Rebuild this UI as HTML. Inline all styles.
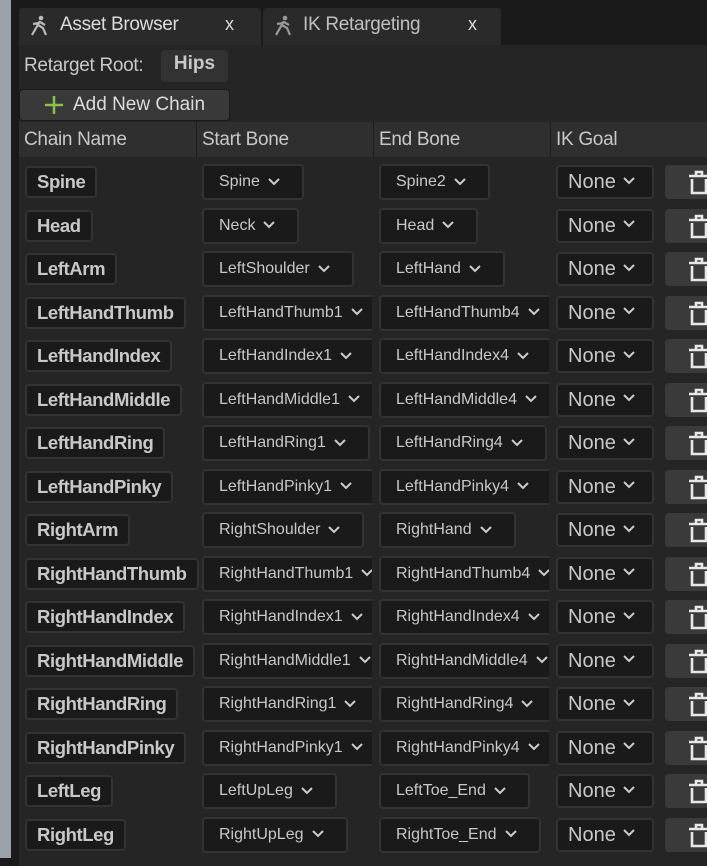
<!DOCTYPE html><html><head><style>
body{margin:0;width:707px;height:866px;background:#1a1a1a;position:relative;overflow:hidden;font-family:"Liberation Sans",sans-serif;color:#c8c8c8}
.strip{position:absolute;left:0;top:0;width:11px;height:858px;background:#9aa1ab}
.tab{position:absolute;top:8px;height:37px;background:#2a2a2a;border-radius:4px 4px 0 0;font-size:19px;color:#dcdcdc;line-height:33px;letter-spacing:-0.3px}
.tab .x{position:absolute;font-size:18px}
.panel{position:absolute;left:19px;top:45px;right:0;bottom:0;background:#252525}
.hdr{position:absolute;left:19px;top:122px;right:0;height:35px;background:#2f2f2f;font-size:19px;line-height:35px;letter-spacing:-0.3px}
.hdr span{position:absolute;top:0;height:35px;border-left:1px solid #1e1e1e;padding-left:5px;box-sizing:border-box}
.row{position:absolute;left:0;width:707px;height:36px}
.nm{position:absolute;left:25px;top:2px;height:32px;box-sizing:border-box;border:2px solid #333;border-radius:4px;background:#1a1a1a;font-weight:bold;font-size:18.5px;letter-spacing:-0.4px;line-height:27px;padding:0 10px}
.cell{position:absolute;top:0;height:36px;overflow:hidden}
.dd{display:inline-block;height:36px;box-sizing:border-box;border:2px solid #333;border-radius:4px;background:#1a1a1a;font-size:16px;line-height:32px;padding:0 22px 0 15px;white-space:nowrap}
.dd svg{margin-left:8px;vertical-align:middle}
.none{position:absolute;left:556px;top:1px;width:98px;height:34px;box-sizing:border-box;border:2px solid #333;border-radius:4px;background:#1a1a1a;font-size:20px;line-height:30px;padding-left:10px}
.none svg{vertical-align:middle;margin-left:2px;position:relative;top:-2px}
.del{position:absolute;left:665px;top:1px;width:50px;height:34px;border-radius:4px;background:#3a3a3a}
.del svg{position:absolute;left:687px}
</style></head><body>
<div class="strip"></div>
<div class="tab" style="left:19px;width:242px"><svg style="position:absolute;left:10px;top:7px" width="20" height="22" viewBox="0 0 20 22"><circle cx="12" cy="3" r="2.3" fill="#bbb"/><path d="M11 6 L7 13 L3 20 M9 10 L14 13 L17 20 M10 8 L4 9 M11 7 L16 10" stroke="#bbb" stroke-width="2.2" fill="none"/></svg><span style="position:absolute;left:41px">Asset Browser</span><span class="x" style="left:206px">x</span></div>
<div class="tab" style="left:263px;width:238px"><svg style="position:absolute;left:10px;top:7px" width="20" height="22" viewBox="0 0 20 22"><circle cx="12" cy="3" r="2.3" fill="#999"/><path d="M11 6 L7 13 L3 20 M9 10 L14 13 L17 20 M10 8 L4 9 M11 7 L16 10" stroke="#999" stroke-width="2.2" fill="none"/></svg><span style="position:absolute;left:40px;color:#c0c0c0">IK Retargeting</span><span class="x" style="left:205px">x</span></div>
<div class="panel"></div>
<div style="position:absolute;left:24px;top:53px;font-size:19px;line-height:26px;letter-spacing:-0.3px">Retarget Root:</div>
<div style="position:absolute;left:161px;top:50px;width:67px;height:32px;background:#323232;border-radius:4px;font-weight:bold;font-size:19px;line-height:28px;text-align:center">Hips</div>
<div style="position:absolute;left:19px;top:89px;width:211px;height:32px;box-sizing:border-box;border:1px solid #1a1a1a;background:#393939;border-radius:4px;font-size:19px;line-height:29px;color:#dcdcdc"><svg style="position:absolute;left:24px;top:5px" width="20" height="20"><path d="M10 1V19M1 10H19" stroke="#8bc34a" stroke-width="2.5"/></svg><span style="position:absolute;left:53px">Add New Chain</span></div>
<div class="hdr"><span style="left:0;border:none">Chain Name</span><span style="left:177px">Start Bone</span><span style="left:354px">End Bone</span><span style="left:531px">IK Goal</span></div>

<svg width="0" height="0" style="position:absolute"><defs><symbol id="c" viewBox="0 0 12 8"><path d="M1 1L6 6L11 1" stroke="#ccc" stroke-width="2" fill="none"/></symbol><symbol id="t" viewBox="0 0 24 26"><path d="M9 5V2H15V5M2 6H22M5 9V23H19V9" stroke="#e8e8e8" stroke-width="2.6" fill="none"/></symbol></defs></svg>

<div id="rows">
<div class="row" style="top:164px"><div class="nm">Spine</div><div class="cell" style="left:202px;width:170px"><span class="dd">Spine<svg width="12" height="8"><use href="#c"/></svg></span></div><div class="cell" style="left:379px;width:170px"><span class="dd">Spine2<svg width="12" height="8"><use href="#c"/></svg></span></div><div class="none">None <svg width="12" height="8"><use href="#c"/></svg></div><div class="del"><svg style="position:absolute;left:22px;top:5px" width="24" height="26"><use href="#t"/></svg></div></div>
<div class="row" style="top:207.5px"><div class="nm">Head</div><div class="cell" style="left:202px;width:170px"><span class="dd">Neck<svg width="12" height="8"><use href="#c"/></svg></span></div><div class="cell" style="left:379px;width:170px"><span class="dd">Head<svg width="12" height="8"><use href="#c"/></svg></span></div><div class="none">None <svg width="12" height="8"><use href="#c"/></svg></div><div class="del"><svg style="position:absolute;left:22px;top:5px" width="24" height="26"><use href="#t"/></svg></div></div>
<div class="row" style="top:251px"><div class="nm">LeftArm</div><div class="cell" style="left:202px;width:170px"><span class="dd">LeftShoulder<svg width="12" height="8"><use href="#c"/></svg></span></div><div class="cell" style="left:379px;width:170px"><span class="dd">LeftHand<svg width="12" height="8"><use href="#c"/></svg></span></div><div class="none">None <svg width="12" height="8"><use href="#c"/></svg></div><div class="del"><svg style="position:absolute;left:22px;top:5px" width="24" height="26"><use href="#t"/></svg></div></div>
<div class="row" style="top:294.5px"><div class="nm">LeftHandThumb</div><div class="cell" style="left:202px;width:170px"><span class="dd">LeftHandThumb1<svg width="12" height="8"><use href="#c"/></svg></span></div><div class="cell" style="left:379px;width:170px"><span class="dd">LeftHandThumb4<svg width="12" height="8"><use href="#c"/></svg></span></div><div class="none">None <svg width="12" height="8"><use href="#c"/></svg></div><div class="del"><svg style="position:absolute;left:22px;top:5px" width="24" height="26"><use href="#t"/></svg></div></div>
<div class="row" style="top:338px"><div class="nm">LeftHandIndex</div><div class="cell" style="left:202px;width:170px"><span class="dd">LeftHandIndex1<svg width="12" height="8"><use href="#c"/></svg></span></div><div class="cell" style="left:379px;width:170px"><span class="dd">LeftHandIndex4<svg width="12" height="8"><use href="#c"/></svg></span></div><div class="none">None <svg width="12" height="8"><use href="#c"/></svg></div><div class="del"><svg style="position:absolute;left:22px;top:5px" width="24" height="26"><use href="#t"/></svg></div></div>
<div class="row" style="top:381.5px"><div class="nm">LeftHandMiddle</div><div class="cell" style="left:202px;width:170px"><span class="dd">LeftHandMiddle1<svg width="12" height="8"><use href="#c"/></svg></span></div><div class="cell" style="left:379px;width:170px"><span class="dd">LeftHandMiddle4<svg width="12" height="8"><use href="#c"/></svg></span></div><div class="none">None <svg width="12" height="8"><use href="#c"/></svg></div><div class="del"><svg style="position:absolute;left:22px;top:5px" width="24" height="26"><use href="#t"/></svg></div></div>
<div class="row" style="top:425px"><div class="nm">LeftHandRing</div><div class="cell" style="left:202px;width:170px"><span class="dd">LeftHandRing1<svg width="12" height="8"><use href="#c"/></svg></span></div><div class="cell" style="left:379px;width:170px"><span class="dd">LeftHandRing4<svg width="12" height="8"><use href="#c"/></svg></span></div><div class="none">None <svg width="12" height="8"><use href="#c"/></svg></div><div class="del"><svg style="position:absolute;left:22px;top:5px" width="24" height="26"><use href="#t"/></svg></div></div>
<div class="row" style="top:468.5px"><div class="nm">LeftHandPinky</div><div class="cell" style="left:202px;width:170px"><span class="dd">LeftHandPinky1<svg width="12" height="8"><use href="#c"/></svg></span></div><div class="cell" style="left:379px;width:170px"><span class="dd">LeftHandPinky4<svg width="12" height="8"><use href="#c"/></svg></span></div><div class="none">None <svg width="12" height="8"><use href="#c"/></svg></div><div class="del"><svg style="position:absolute;left:22px;top:5px" width="24" height="26"><use href="#t"/></svg></div></div>
<div class="row" style="top:512px"><div class="nm">RightArm</div><div class="cell" style="left:202px;width:170px"><span class="dd">RightShoulder<svg width="12" height="8"><use href="#c"/></svg></span></div><div class="cell" style="left:379px;width:170px"><span class="dd">RightHand<svg width="12" height="8"><use href="#c"/></svg></span></div><div class="none">None <svg width="12" height="8"><use href="#c"/></svg></div><div class="del"><svg style="position:absolute;left:22px;top:5px" width="24" height="26"><use href="#t"/></svg></div></div>
<div class="row" style="top:555.5px"><div class="nm">RightHandThumb</div><div class="cell" style="left:202px;width:170px"><span class="dd">RightHandThumb1<svg width="12" height="8"><use href="#c"/></svg></span></div><div class="cell" style="left:379px;width:170px"><span class="dd">RightHandThumb4<svg width="12" height="8"><use href="#c"/></svg></span></div><div class="none">None <svg width="12" height="8"><use href="#c"/></svg></div><div class="del"><svg style="position:absolute;left:22px;top:5px" width="24" height="26"><use href="#t"/></svg></div></div>
<div class="row" style="top:599px"><div class="nm">RightHandIndex</div><div class="cell" style="left:202px;width:170px"><span class="dd">RightHandIndex1<svg width="12" height="8"><use href="#c"/></svg></span></div><div class="cell" style="left:379px;width:170px"><span class="dd">RightHandIndex4<svg width="12" height="8"><use href="#c"/></svg></span></div><div class="none">None <svg width="12" height="8"><use href="#c"/></svg></div><div class="del"><svg style="position:absolute;left:22px;top:5px" width="24" height="26"><use href="#t"/></svg></div></div>
<div class="row" style="top:642.5px"><div class="nm">RightHandMiddle</div><div class="cell" style="left:202px;width:170px"><span class="dd">RightHandMiddle1<svg width="12" height="8"><use href="#c"/></svg></span></div><div class="cell" style="left:379px;width:170px"><span class="dd">RightHandMiddle4<svg width="12" height="8"><use href="#c"/></svg></span></div><div class="none">None <svg width="12" height="8"><use href="#c"/></svg></div><div class="del"><svg style="position:absolute;left:22px;top:5px" width="24" height="26"><use href="#t"/></svg></div></div>
<div class="row" style="top:686px"><div class="nm">RightHandRing</div><div class="cell" style="left:202px;width:170px"><span class="dd">RightHandRing1<svg width="12" height="8"><use href="#c"/></svg></span></div><div class="cell" style="left:379px;width:170px"><span class="dd">RightHandRing4<svg width="12" height="8"><use href="#c"/></svg></span></div><div class="none">None <svg width="12" height="8"><use href="#c"/></svg></div><div class="del"><svg style="position:absolute;left:22px;top:5px" width="24" height="26"><use href="#t"/></svg></div></div>
<div class="row" style="top:729.5px"><div class="nm">RightHandPinky</div><div class="cell" style="left:202px;width:170px"><span class="dd">RightHandPinky1<svg width="12" height="8"><use href="#c"/></svg></span></div><div class="cell" style="left:379px;width:170px"><span class="dd">RightHandPinky4<svg width="12" height="8"><use href="#c"/></svg></span></div><div class="none">None <svg width="12" height="8"><use href="#c"/></svg></div><div class="del"><svg style="position:absolute;left:22px;top:5px" width="24" height="26"><use href="#t"/></svg></div></div>
<div class="row" style="top:773px"><div class="nm">LeftLeg</div><div class="cell" style="left:202px;width:170px"><span class="dd">LeftUpLeg<svg width="12" height="8"><use href="#c"/></svg></span></div><div class="cell" style="left:379px;width:170px"><span class="dd">LeftToe_End<svg width="12" height="8"><use href="#c"/></svg></span></div><div class="none">None <svg width="12" height="8"><use href="#c"/></svg></div><div class="del"><svg style="position:absolute;left:22px;top:5px" width="24" height="26"><use href="#t"/></svg></div></div>
<div class="row" style="top:816.5px"><div class="nm">RightLeg</div><div class="cell" style="left:202px;width:170px"><span class="dd">RightUpLeg<svg width="12" height="8"><use href="#c"/></svg></span></div><div class="cell" style="left:379px;width:170px"><span class="dd">RightToe_End<svg width="12" height="8"><use href="#c"/></svg></span></div><div class="none">None <svg width="12" height="8"><use href="#c"/></svg></div><div class="del"><svg style="position:absolute;left:22px;top:5px" width="24" height="26"><use href="#t"/></svg></div></div>
</div>
</body></html>
